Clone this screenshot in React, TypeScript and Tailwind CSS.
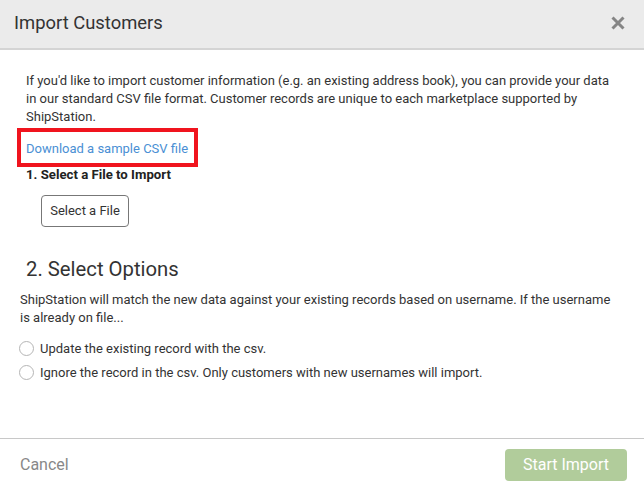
import React from "react";

export default function App() {
  return (
    <div className="w-[644px] h-[491px] bg-white flex flex-col text-[#333] overflow-hidden" style={{ fontFamily: "Roboto, 'Liberation Sans', sans-serif" }}>
      <div className="h-[50px] shrink-0 bg-[#ebebeb] border-b-2 border-[#d4d4d4] flex items-center justify-between pl-[14px] pr-[19px]">
        <h1 className="text-[18.4px] leading-none text-[#333] mt-[-1px]">Import Customers</h1>
        <svg width="14" height="14" viewBox="0 0 14 14" className="mt-[-2px]">
          <path d="M1.5 1.5 L12.5 12.5 M12.5 1.5 L1.5 12.5" stroke="#858585" strokeWidth="3" strokeLinecap="butt" />
        </svg>
      </div>
      <div className="flex-1 flex flex-col px-5 pt-[22px]">
        <div className="pl-[6px]">
          <p className="text-[13px] leading-[18px] text-[#333] pr-[2px]">
            If you'd like to import customer information (e.g. an existing address book), you can provide your data in our standard CSV file format. Customer records are unique to each marketplace supported by ShipStation.
          </p>
          <div className="ml-[-9px] mt-[2px] w-[181px] h-[39px] border-4 border-[#f0141e] flex items-center pl-[5px]">
            <a className="text-[13px] text-[#4a8fd4] leading-none mt-[1px]">Download a sample CSV file</a>
          </div>
          <div className="text-[13.2px] leading-[18px] font-bold text-[#222] mt-[-1px]">1. Select a File to Import</div>
          <button className="ml-[15px] mt-[11px] w-[88px] h-[32px] border border-[#777] rounded-[4px] text-[13px] text-[#333] bg-white">Select a File</button>
          <h2 className="text-[20.3px] leading-none text-[#333] mt-[32px]">2. Select Options</h2>
        </div>
        <p className="text-[13px] leading-[18px] text-[#333] mt-[12px] pr-[12px]">
          ShipStation will match the new data against your existing records based on username. If the username is already on file...
        </p>
        <div className="mt-[14px] flex flex-col gap-[10px]">
          {["Update the existing record with the csv.", "Ignore the record in the csv. Only customers with new usernames will import."].map((t) => (
            <label key={t} className="flex items-center h-[14px] text-[13px] text-[#333]">
              <span className="w-[15px] h-[15px] rounded-full border border-[#b5b5b5] bg-white ml-[-1px] mr-[6px] shrink-0" />
              {t}
            </label>
          ))}
        </div>
      </div>
      <div className="h-[53px] shrink-0 border-t border-[#c8c8c8] flex items-center justify-between pl-5 pr-[17px]">
        <span className="text-[16px] text-[#888]">Cancel</span>
        <button className="w-[122px] h-[32px] rounded-[4px] bg-[#b1cc9b] text-white text-[16px]">Start Import</button>
      </div>
    </div>
  );
}
